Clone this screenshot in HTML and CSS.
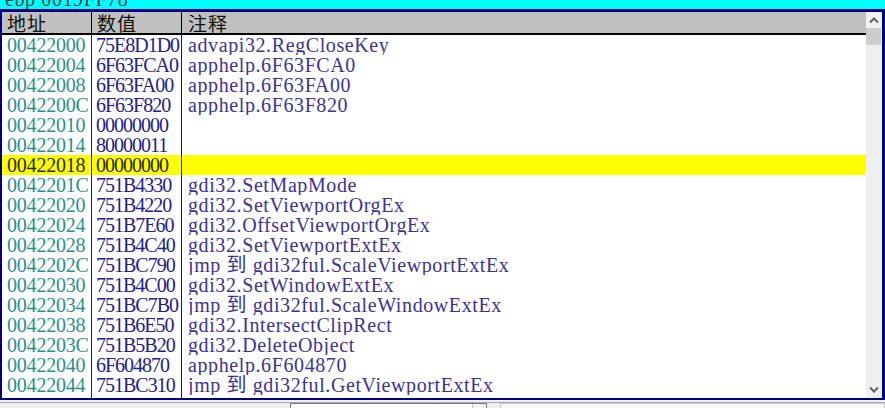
FILE: index.html
```html
<!DOCTYPE html>
<html lang="zh-CN">
<head>
<meta charset="utf-8">
<title>dump</title>
<link rel="stylesheet" href="styles.css">
</head>
<body>
<div class="topbar"><span class="toptext">ebp 0019FF78</span></div>
<div class="panel">
  <div class="table">
    <div class="head">
      <div class="cell c1">地址</div>
      <div class="cell c2">数值</div>
      <div class="cell c3">注释</div>
    </div>
    <div class="rows">
      <div class="row"><div class="cell c1 addr">00422000</div><div class="cell c2 val">75E8D1D0</div><div class="cell c3 cmt">advapi32.RegCloseKey</div></div>
      <div class="row"><div class="cell c1 addr">00422004</div><div class="cell c2 val">6F63FCA0</div><div class="cell c3 cmt">apphelp.6F63FCA0</div></div>
      <div class="row"><div class="cell c1 addr">00422008</div><div class="cell c2 val">6F63FA00</div><div class="cell c3 cmt">apphelp.6F63FA00</div></div>
      <div class="row"><div class="cell c1 addr">0042200C</div><div class="cell c2 val">6F63F820</div><div class="cell c3 cmt">apphelp.6F63F820</div></div>
      <div class="row"><div class="cell c1 addr">00422010</div><div class="cell c2 val">00000000</div><div class="cell c3 cmt"></div></div>
      <div class="row"><div class="cell c1 addr">00422014</div><div class="cell c2 val">80000011</div><div class="cell c3 cmt"></div></div>
      <div class="row sel"><div class="cell c1 addr">00422018</div><div class="cell c2 val">00000000</div><div class="cell c3 cmt"></div></div>
      <div class="row"><div class="cell c1 addr">0042201C</div><div class="cell c2 val">751B4330</div><div class="cell c3 cmt">gdi32.SetMapMode</div></div>
      <div class="row"><div class="cell c1 addr">00422020</div><div class="cell c2 val">751B4220</div><div class="cell c3 cmt">gdi32.SetViewportOrgEx</div></div>
      <div class="row"><div class="cell c1 addr">00422024</div><div class="cell c2 val">751B7E60</div><div class="cell c3 cmt">gdi32.OffsetViewportOrgEx</div></div>
      <div class="row"><div class="cell c1 addr">00422028</div><div class="cell c2 val">751B4C40</div><div class="cell c3 cmt">gdi32.SetViewportExtEx</div></div>
      <div class="row"><div class="cell c1 addr">0042202C</div><div class="cell c2 val">751BC790</div><div class="cell c3 cmt">jmp 到 gdi32ful.ScaleViewportExtEx</div></div>
      <div class="row"><div class="cell c1 addr">00422030</div><div class="cell c2 val">751B4C00</div><div class="cell c3 cmt">gdi32.SetWindowExtEx</div></div>
      <div class="row"><div class="cell c1 addr">00422034</div><div class="cell c2 val">751BC7B0</div><div class="cell c3 cmt">jmp 到 gdi32ful.ScaleWindowExtEx</div></div>
      <div class="row"><div class="cell c1 addr">00422038</div><div class="cell c2 val">751B6E50</div><div class="cell c3 cmt">gdi32.IntersectClipRect</div></div>
      <div class="row"><div class="cell c1 addr">0042203C</div><div class="cell c2 val">751B5B20</div><div class="cell c3 cmt">gdi32.DeleteObject</div></div>
      <div class="row"><div class="cell c1 addr">00422040</div><div class="cell c2 val">6F604870</div><div class="cell c3 cmt">apphelp.6F604870</div></div>
      <div class="row"><div class="cell c1 addr">00422044</div><div class="cell c2 val">751BC310</div><div class="cell c3 cmt">jmp 到 gdi32ful.GetViewportExtEx</div></div>
      <div class="row filler"><div class="cell c1"></div><div class="cell c2"></div><div class="cell c3"></div></div>
    </div>
  </div>
  <div class="scroll">
    <div class="arrow"><svg width="16" height="16" viewBox="0 0 16 16"><path d="M4 10.5 L8 6.5 L12 10.5" fill="none" stroke="#606060" stroke-width="2"/></svg></div>
    <div class="thumb"></div>
    <div class="track"></div>
    <div class="arrow"><svg width="16" height="16" viewBox="0 0 16 16"><path d="M4 5.5 L8 9.5 L12 5.5" fill="none" stroke="#606060" stroke-width="2"/></svg></div>
  </div>
</div>
<div class="bottom">
  <div class="bline"></div>
  <div class="boxes">
    <div class="combo"><div class="combo-btn"></div></div>
    <div class="field"></div>
  </div>
</div>
</body>
</html>
```
FILE: styles.css
```css
* { box-sizing: border-box; }

body {
  margin: 0;
  width: 885px;
  height: 408px;
  overflow: hidden;
  background: #f0f0f0;
  font-family: "Liberation Serif", "Noto Sans CJK SC", serif;
}

.topbar {
  height: 9px;
  background: #00ffff;
  overflow: hidden;
}

.toptext {
  display: block;
  margin-top: -11px;
  padding-left: 5px;
  font-size: 20px;
  line-height: 20px;
  letter-spacing: 0.6px;
  color: #204848;
}

.panel {
  display: flex;
  height: 391px;
  border-style: solid;
  border-color: #000080;
  border-width: 3px 3px 2px 2px;
  background: #ffffff;
}

.table {
  flex: 1;
  min-width: 0;
  display: flex;
  flex-direction: column;
}

.head {
  display: flex;
  height: 23px;
  background: #c0c0c0;
  border-bottom: 2px solid #000000;
}

.cell {
  padding-left: 5px;
  white-space: nowrap;
  overflow: hidden;
}

.head .cell {
  font-family: "Noto Sans CJK SC", sans-serif;
  font-size: 19px;
  line-height: 21px;
  color: #111111;
  letter-spacing: 1px;
  border-right-color: #000000;
}

.c1, .c2 {
  width: 90px;
  flex: none;
  border-right: 1px solid #1010c0;
}

.c3 {
  flex: 1;
  padding-left: 6px;
}

.rows {
  flex: 1;
  display: flex;
  flex-direction: column;
}

.row {
  display: flex;
  height: 20px;
  flex: none;
  font-size: 20px;
  line-height: 20px;
}

.row.filler {
  flex: 1;
  height: auto;
}

.addr { color: #2a8f8f; letter-spacing: -0.2px; }
.val { color: #24208e; letter-spacing: -1px; padding-left: 4px; }
.cmt { color: #3c3396; letter-spacing: 0.6px; }

.row.sel { background: #ffff00; }
.row.sel .addr, .row.sel .val { color: #2a2a10; }

.scroll {
  width: 16px;
  flex: none;
  background: #f0f0f0;
  display: flex;
  flex-direction: column;
}

.arrow {
  height: 16px;
  display: flex;
  align-items: center;
  justify-content: center;
}

.thumb {
  height: 17px;
  margin-right: 1px;
  background: #cdcdcd;
}

.track { flex: 1; }

.bottom {
  height: 8px;
  padding-top: 2px;
}

.bline {
  height: 1px;
  background: #a8a8a8;
}

.boxes {
  display: flex;
  height: 5px;
  padding-left: 290px;
}

.combo {
  width: 197px;
  height: 5px;
  background: #ffffff;
  border: 1px solid #7a7a7a;
  border-bottom: none;
  display: flex;
  justify-content: flex-end;
}

.combo-btn {
  width: 14px;
  border-left: 1px solid #c8c8c8;
  background: #f4f4f4;
}

.field {
  flex: 1;
  margin-left: 13px;
  height: 5px;
  background: #f8f8f8;
  border: 1px solid #c8c8c8;
  border-bottom: none;
}
```
